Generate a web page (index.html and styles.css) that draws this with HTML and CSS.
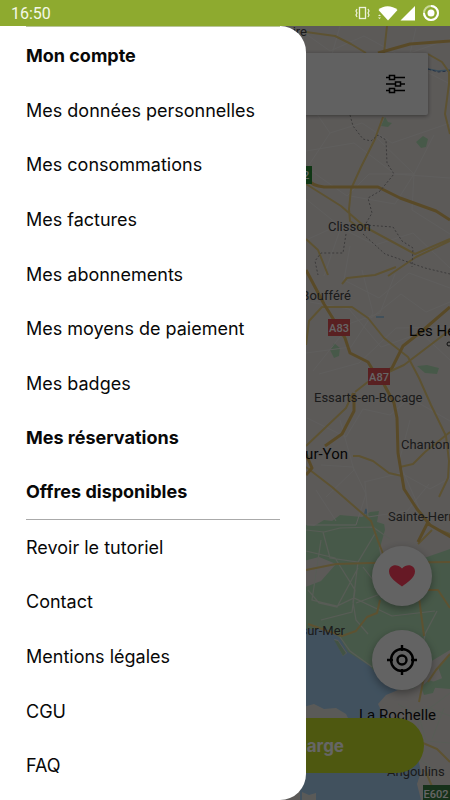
FILE: index.html
```html
<!DOCTYPE html>
<html lang="fr">
<head>
    <meta charset="UTF-8">
    <meta name="viewport" content="width=device-width, initial-scale=1.0">
    <title>Mon compte</title>
    <link rel="stylesheet" href="styles.css">
</head>
<body>
    <header class="status-bar">
        <span class="time">16:50</span>
        <svg class="status-icons" width="90" height="26" viewBox="350 0 90 26" aria-hidden="true">
            <g fill="none" stroke="#edf3dc">
                <rect x="359.500" y="7.500" width="6" height="11" stroke-width="1.300"/>
                <path d="M357 9l-1 2 1 2-1 2 1 2M368 9l1 2-1 2 1 2-1 2" stroke-width="1.200"/>
            </g>
            <path d="M378.500 10C383 5 392 5 397.500 10L388 20.500z" fill="#fff"/>
            <path d="M378 16l1.500-1.500 1.500 1.500zM378 17.500h3l-1.500 1.500z" fill="#edf3dc"/>
            <path d="M400.500 20.500L415 6v14.500z" fill="#fff"/>
            <circle cx="431" cy="13" r="7" fill="none" stroke="#c9d99a" stroke-width="2"/>
            <path d="M431 6a7 7 0 1 1-7 7" fill="none" stroke="#fff" stroke-width="2"/>
            <circle cx="431" cy="13" r="3.500" fill="#fff"/>
        </svg>
    </header>

    <main class="screen">
        <svg class="map" viewBox="0 26 450 774" preserveAspectRatio="xMaxYMin slice" role="img" aria-label="Carte">
            <rect y="26" width="450" height="774" fill="#e6e1dd"/>

            <!-- forêts et espaces verts -->
            <g fill="#b2dfb6">
                <path d="M300 524l14 2 10-6 8 1 8-6 22 2 8-5 9-1-2 11 10 3-1 14-7 8 2 12 20 4 26-6 23-8v140l-25-2-40 4-37-26-20-31-28-5z"/>
                <path d="M330 350l4-7 6 5-1 8-5 2zM417 366l10-1 12 3-2 6-12-1zM416 142l7-6 5 3-2 8-5 1zM381 126l4-9 3 5 4 1-4 4z"/>
            </g>
            <g fill="#e6e1dd">
                <path d="M383 515l30-5 37 5v32l-25 8-14 6-26-4-4-13 4-14z"/>
                <path d="M300 562l19-5 17 7-15 17-21 8zM410 678l20-16 20-12v25l-20 8-12 12z"/>
            </g>

            <!-- océan -->
            <path d="M300 629h28l12 9 8 14 22 14 14 16 14 8-12 5-8 9 6 12 20 30 14 12 3 14-4 12 4 16H300z" fill="#a2cbec"/>
            <path d="M300 708l14-4 10 5 12-1 10 6 3 6H300zM302 792l7 3 7-2v7h-14zM334 639l4 1 9 13-4 3z" fill="#e2e2db"/>
            <path d="M334 640l4 1 8 12-3 3z" fill="#a6cfab"/>
            <path d="M421 687l8-7 8 3-4 10-9 2zM438 667l12-13v31l-8-7z" fill="#b2dfb6"/>
            <path d="M376 317h8M365 513l1-4 1 4zM428 69l10 2 12-1" fill="none" stroke="#8fc0e2" stroke-width="1.500"/>
            <path d="M428 69l10 3 12-1" fill="none" stroke="#5f7fb0" stroke-dasharray="3 2"/>

            <!-- petites routes -->
            <g fill="none" stroke="#eeebe8" stroke-width="1">
                <path d="M306 34l24 17 34-15 37 20 49-17M318 56l-8 48 20 29 32-10 30 20 58-20M340 26l-9 32 31 32 37-14M416 28l-8 34 42 22"/>
                <path d="M306 151l48-8 41 31 55 4M330 133l-23 35 40 28 22-22 45 0 20-39M375 136l39 38-19 30-45-8M414 174l-2 36 38 24M306 240l31-14 38 19 38-12 37 35M350 246l-6 34 35 18 30-25 41 15M306 199l35 28-17 49"/>
                <path d="M310 302l39 7 32 38 40-14 29 27M362 270l11 43-22 34-45 6M395 274l-15 39-29 10-38 48M319 374l40-11 37-35 54-1M371 318l30-24 25 18 24-10"/>
                <path d="M307 418l39 19 17-28 27 6 20-17 40 23M321 465l32 2 13 27-10 31-49 0M364 482l37-9 29 16 20-11M365 482l3 35 39-6 22-27M340 420l14 50-28 27M410 420l-11 42 24 55M316 490l20 31"/>
            </g>
            <g fill="none" stroke="#dce6d7" stroke-width="1.200">
                <path d="M306 530l18 2 16-4 33-1 17 12M323 532l7 26 28 4 18-30M306 551l29 7 20 32-3 22-31 8M358 562l-5 40 3 18 12 14M321 540l-9 60 25 6 17-8 38 18 43-5M308 590l11 13 18 4 21-39M437 611l-12 23-5 32M363 567l20 26-27 10"/>
                <path d="M340 637l10 14 22 16M398 704l14 8 17-4 21 8M417 709l9 32 24 2M450 693l-32 24 1 42 23 17M444 708l-12 31"/>
            </g>

            <!-- routes principales -->
            <g fill="none" stroke="#e8cc7c" stroke-width="2" stroke-linejoin="round">
                <path d="M306 32l29 4 16 8 15 9M387 26l-3 27M428 54l14 8 7 10v12l-4 30 5 20M383 117l-8 22-14 28-10 22-2 20 1 12 12 9M306 184l35 22 24 21 50 27 35-15M306 239l12 11 10 25M342 284l5-6 28-3 21-8M388 276l28-19 34-16"/>
                <path d="M306 345l3-24 13-14h30l16 11 16 20 24 19 11 21 12 27 15 31 3 25-1 17-9 19"/>
                <path d="M306 467l26 20 39 34 7 20 14 35M353 393l-7 15-40 38M355 392l14-11 35-16 46-35M353 456h6l14 5 16 12 13 3M400 467l13-3 12-12 25-20"/>
                <path d="M306 570l30-6 34-1 80-1M380 600l-3 13-10 4-11 14-14 5-34-12M418 590l6 46M428 590h10l12 18M432 530l-14 14M439 530l11 4M430 660l-7 22-4 20M450 654l-14 16-8 12M423 743l14 6 13 13M425 770l9 21"/>
            </g>
            <g fill="none" stroke="#dfb862" stroke-width="3" stroke-linejoin="round">
                <path d="M378 53l32-9 40-3M306 178q6 8 18 9h54l22 11 36 13 14 9M306 270l18 34 21 34 5 15 18 9 9 15 15-9 11-22 19-15 28-24"/>
                <path d="M380 377l14 26 3 15 1 35 6 36 13 20 13 16 21 12M354 393v18l-12 23-17 12M306 454l6 14-6 7M428 522l-10 20"/>
            </g>
            <path d="M350 115l3 11 10 13 8 2 7-6 8 5 1 23 7 11-14 17-12 7 4 15-7 12 28 2 9 14 11 7-1 19M363 234l22 20 40 14 25 6M346 234l-3 19h-22l-6 8 3 14" fill="none" stroke="#949191" stroke-dasharray="2 2"/>

            <!-- panneaux -->
            <rect x="290" y="166" width="22" height="18" fill="#288a35"/>
            <rect x="328" y="319" width="22" height="17" fill="#df5054"/>
            <rect x="368" y="368" width="22" height="17" fill="#df5054"/>
            <rect x="423" y="785" width="27" height="15" fill="#397c41"/>
            <g class="shield">
                <text x="303" y="179">2</text>
                <text x="339" y="332" text-anchor="middle">A83</text>
                <text x="379" y="381" text-anchor="middle">A87</text>
                <text x="436" y="798" text-anchor="middle">E602</text>
            </g>

            <!-- villes -->
            <g class="town">
                <text x="307" y="36" text-anchor="end">Loire</text>
                <text x="328" y="231">Clisson</text>
                <text x="351" y="300" text-anchor="end">Boufféré</text>
                <text x="314" y="402">Essarts-en-Bocage</text>
                <text x="401" y="449">Chantonnay</text>
                <text x="388" y="521">Sainte-Hermine</text>
                <text x="345" y="635" text-anchor="end">La Tranche-sur-Mer</text>
                <text x="387" y="776">Angoulins</text>
            </g>
            <g class="city">
                <text x="409" y="336">Les Herbiers</text>
                <text x="348" y="459" text-anchor="end">La Roche-sur-Yon</text>
                <text x="359" y="720">La Rochelle</text>
            </g>
            <circle cx="449" cy="344" r="2" fill="none" stroke="#222"/>
        </svg>

        <div class="controls">
            <div class="search-card">
                <button class="filter-btn" type="button" aria-label="Filtres">
                    <svg width="20" height="20" viewBox="0 0 20 20" fill="none" stroke="#000" stroke-width="1.500">
                        <path d="M1 3.500h3M9.500 3.500H20M1 10h9M15.500 10H20M1 16.500h3M9.500 16.500H20"/>
                        <path d="M4.500 1.500h5v4h-5zM10.500 8h5v4h-5zM4.500 14.500h5v4h-5z"/>
                    </svg>
                </button>
            </div>
            <div class="actions">
                <button class="round-btn" type="button" aria-label="Favoris">
                    <svg width="28" height="24" viewBox="0 0 28 24">
                        <path d="M14 22.500C9 18.500 1 14 1 7.500 1 1 9-1 14 4.500 19-1 27 1 27 7.500 27 14 19 18.500 14 22.500z" fill="#ff405c"/>
                    </svg>
                </button>
                <button class="round-btn" type="button" aria-label="Ma position">
                    <svg width="30" height="30" viewBox="0 0 30 30" fill="none" stroke="#000" stroke-width="2.400">
                        <circle cx="15" cy="15" r="11"/>
                        <circle cx="15" cy="15" r="4.500"/>
                        <path d="M15 0v6M15 24v6M0 15h6M24 15h6"/>
                    </svg>
                </button>
                <button class="charge-btn" type="button">Lancer une charge</button>
            </div>
        </div>

        <div class="scrim"></div>

        <nav class="drawer">
            <a class="item title first" href="#">Mon compte</a>
            <div class="group account">
                <a class="item" href="#">Mes données personnelles</a>
                <a class="item" href="#">Mes consommations</a>
                <a class="item" href="#">Mes factures</a>
                <a class="item" href="#">Mes abonnements</a>
                <a class="item" href="#">Mes moyens de paiement</a>
                <a class="item" href="#">Mes badges</a>
            </div>
            <a class="item title" href="#">Mes réservations</a>
            <a class="item title" href="#">Offres disponibles</a>
            <div class="group infos">
                <a class="item" href="#">Revoir le tutoriel</a>
                <a class="item" href="#">Contact</a>
                <a class="item" href="#">Mentions légales</a>
                <a class="item" href="#">CGU</a>
                <a class="item" href="#">FAQ</a>
            </div>
        </nav>
    </main>
</body>
</html>
```

FILE: styles.css
```css
* {
    margin: 0;
    padding: 0;
    box-sizing: border-box;
}

body {
    display: flex;
    flex-direction: column;
    height: 100vh;
    min-height: 640px;
    font-family: Inter, "Liberation Sans", sans-serif;
    color: #080808;
}

button {
    border: none;
    cursor: pointer;
}

.status-bar {
    display: flex;
    align-items: center;
    justify-content: space-between;
    height: 26px;
    padding: 0 10px 0 11px;
    background: #8eaa2f;
    color: #f4f8e8;
    font-family: Roboto, sans-serif;
    font-size: 16px;
}

.screen {
    position: relative;
    display: flex;
    flex: 1;
    overflow: hidden;
}

/* carte */
.map {
    position: absolute;
    inset: 0;
    width: 100%;
    height: 100%;
}

.town, .city, .shield {
    font-family: Roboto, sans-serif;
}

.town {
    font-size: 13px;
    fill: #454545;
}

.city {
    font-size: 15px;
    fill: #111;
}

.shield {
    font-size: 11px;
    font-weight: 500;
    fill: #fff;
}

/* commandes posées sur la carte */
.controls {
    position: absolute;
    inset: 0;
    display: flex;
    flex-direction: column;
    justify-content: space-between;
    padding: 27px 22px 27px;
}

.search-card {
    display: flex;
    align-items: center;
    justify-content: flex-end;
    height: 62px;
    padding-right: 23px;
    background: #f2f2f2;
    border-radius: 2px;
    box-shadow: 0 1px 4px rgba(0,0,0,0.4);
}

.filter-btn {
    display: flex;
    background: none;
}

.actions {
    display: flex;
    flex-direction: column;
    align-items: flex-end;
    gap: 24px;
}

.round-btn {
    display: flex;
    align-items: center;
    justify-content: center;
    width: 60px;
    height: 60px;
    margin-right: -4px;
    background: #f8f8f8;
    border-radius: 50%;
    box-shadow: 0 3px 8px rgba(0,0,0,0.35);
}

.charge-btn {
    align-self: stretch;
    height: 55px;
    margin: 4px 4px 0;
    padding-right: 80px;
    background: #c3dc28;
    border-radius: 28px;
    color: #fff;
    font-family: inherit;
    font-size: 17px;
    font-weight: bold;
    text-align: right;
}

.scrim {
    position: absolute;
    inset: 0;
    background: rgba(0,0,0,0.6);
}

/* menu latéral */
.drawer {
    position: relative;
    display: flex;
    flex-direction: column;
    width: 68%;
    padding: 0 26px 7px;
    background: #fff;
    border-radius: 0 26px 26px 0;
}

.group {
    display: flex;
    flex-direction: column;
}

.account {
    flex: 6;
}

.infos {
    flex: 5;
    border-top: 1px solid #aaa;
}

.item {
    display: flex;
    flex: 1;
    align-items: center;
    color: inherit;
    font-size: 18px;
    text-decoration: none;
    white-space: nowrap;
}

.title {
    flex: none;
    height: 54px;
    font-weight: bold;
}

.first {
    height: 57px;
    border-top: 1px solid #b9c59a;
}
```
